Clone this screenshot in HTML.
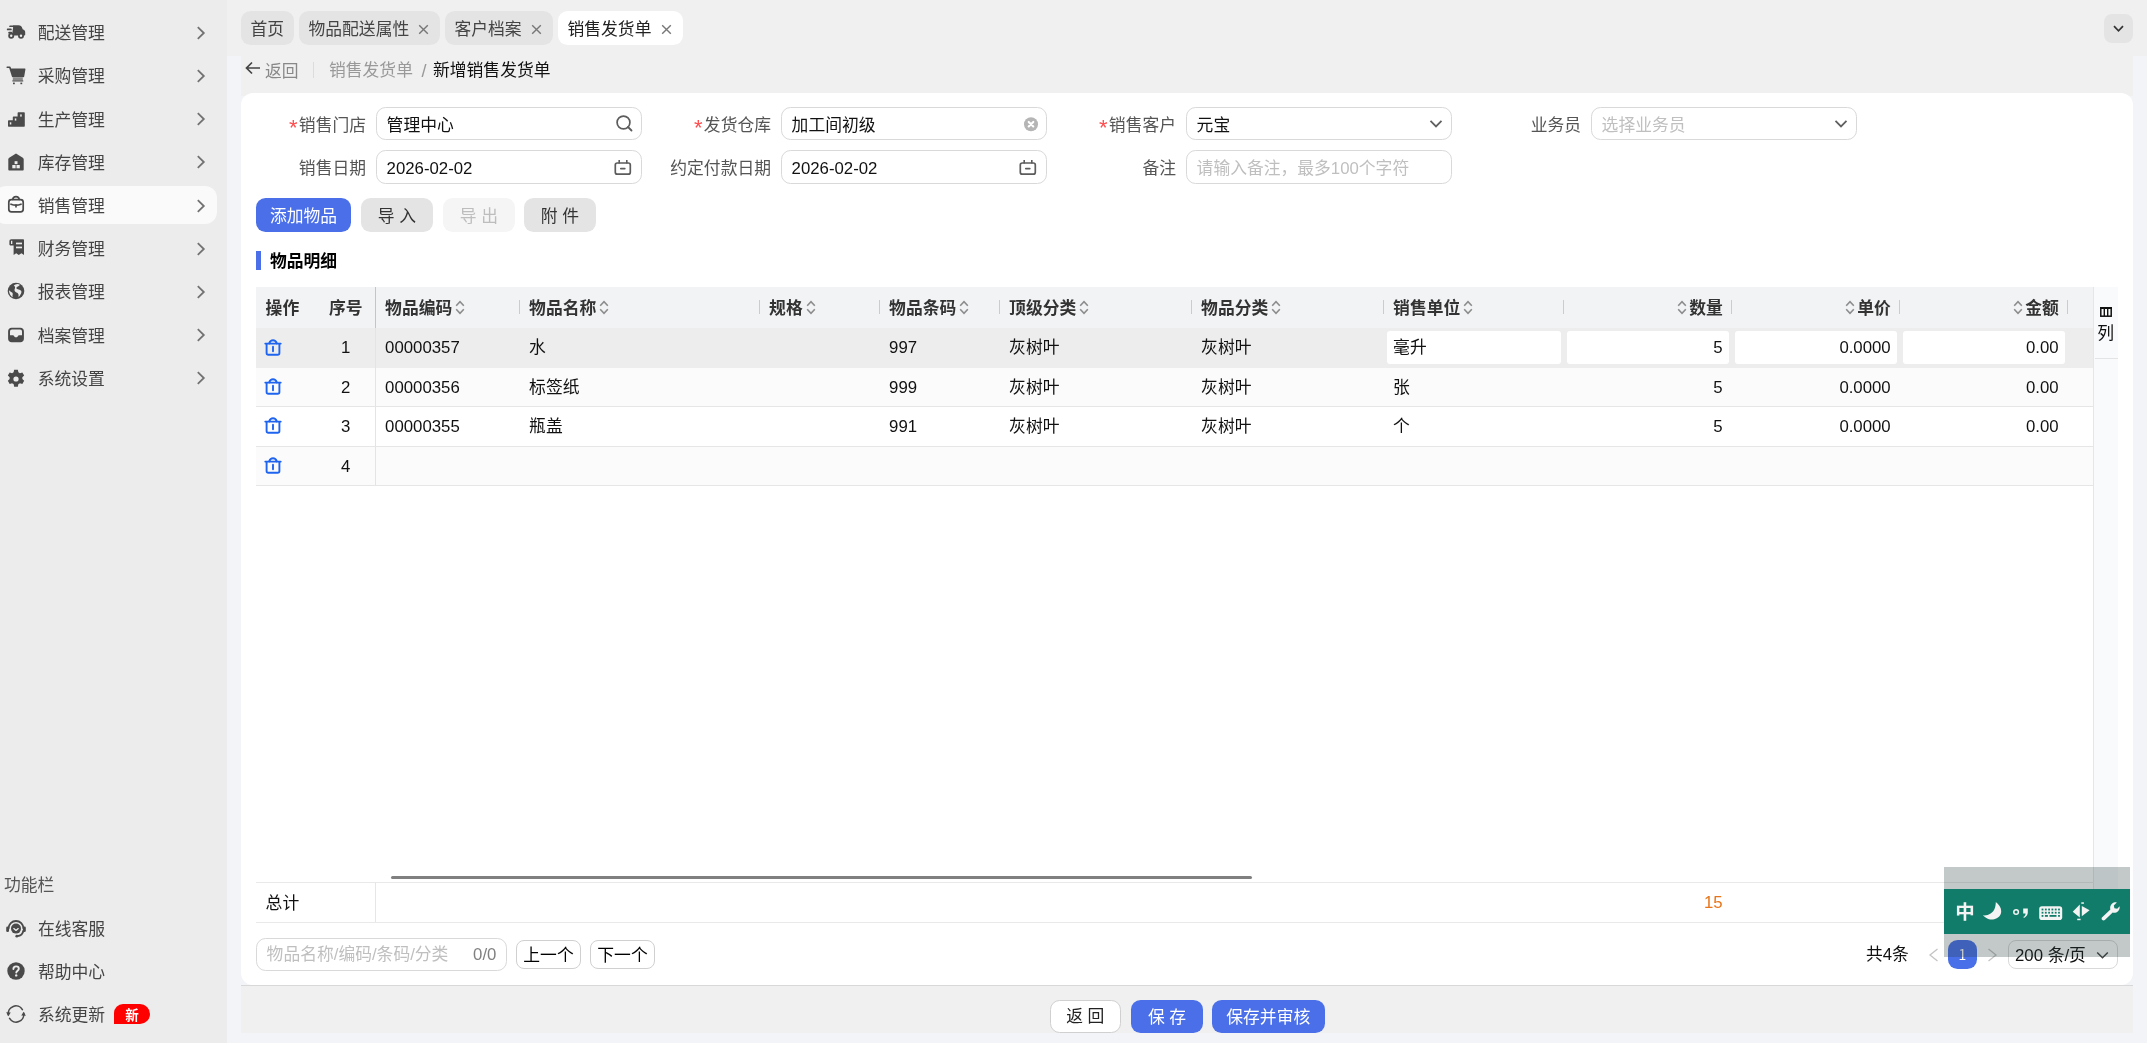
<!DOCTYPE html>
<html lang="zh-CN">
<head>
<meta charset="utf-8">
<title>新增销售发货单</title>
<style>
*{box-sizing:border-box;margin:0;padding:0}
html,body{width:2147px;height:1043px;overflow:hidden}
body{will-change:transform;position:relative;background:#f0f0f0;font-family:"Liberation Sans","Noto Sans CJK SC",sans-serif;font-size:16.8px;color:#333;line-height:1}
.abs{position:absolute}
.fx{display:flex;align-items:center}
/* sidebar */
#side{position:absolute;left:0;top:0;width:227px;height:1043px;background:#ececec}
.mi{position:absolute;left:-6px;width:223px;height:38px;border-radius:12px;display:flex;align-items:center;color:#444;font-size:16.8px}
.mi.on{background:#fafafa}
.mi svg.ic{position:absolute;left:12px;top:9.2px;width:20px;height:20px}
.mi span{position:absolute;left:43.7px;top:1.5px;line-height:38px;white-space:nowrap}
.mi svg.ch{position:absolute;left:201.2px;top:11.2px;width:12px;height:16px}
.fi{position:absolute;left:0;width:227px;height:38px;color:#444}
.fi svg.ic{position:absolute;left:6px;top:9px;width:20px;height:20px}
.fi span{position:absolute;left:38px;top:1.5px;line-height:38px;white-space:nowrap}
/* tabs */
.tab{position:absolute;top:11px;height:34px;padding-top:1.5px;border-radius:9.6px;background:#e4e4e4;color:#444;font-size:16.8px;line-height:34px;padding-left:9.5px;white-space:nowrap}
.tab.on{background:#fff;color:#222}
.tab .x{position:absolute;top:12.8px;width:11px;height:11px}
/* card */
#card{position:absolute;left:241px;top:93px;width:1892px;height:892px;background:#fff;border-radius:12px}
.lbl{position:absolute;height:33.6px;padding-top:1.8px;line-height:33.6px;text-align:right;color:#555;white-space:nowrap;font-size:16.8px}
.lbl i{color:#ff4d4f;font-style:normal;font-size:22px;line-height:10px;position:relative;top:3.8px;margin-right:1.2px}
.inp{position:absolute;height:33.6px;padding-top:1.8px;border:1px solid #d9d9d9;border-radius:9.6px;background:#fff;line-height:31.6px;padding-left:9.6px;color:#111;font-size:16.8px;white-space:nowrap}
.inp.ph{color:#bfbfbf}
.inp svg{position:absolute}
.btn{position:absolute;height:33.6px;padding-top:2px;border-radius:9.6px;line-height:33.6px;text-align:center;font-size:16.8px;white-space:nowrap}
.btn.pri{background:#4a6fe8;color:#fff}
.btn.gry{background:#e4e4e4;color:#333}
.btn.dis{background:#f5f5f5;color:#bdbdbd}
.btn.out{background:#fff;border:1px solid #d0d0d0;color:#222;line-height:31.6px}
</style>
</head>
<body>
<div id="side">
<div class="mi" style="top:13.6px"><svg class="ic" style="margin-top:-0.8px" viewBox="0 0 20 20"><g fill="#4a4a4a"><rect x="3.2" y="3.4" width="5" height="1.7" rx=".85"/><rect x=".8" y="6.6" width="5" height="1.7" rx=".85"/><rect x="2.2" y="9.8" width="4" height="1.7" rx=".85"/>
<path d="M7.2 3.2h5.2c2.2 0 3.3 1.2 4 3.2l.5 1.2c1.5.3 2.3 1.2 2.3 2.6v2.6c0 .5-.3.8-.8.8H5.6c-.4 0-.6-.3-.6-.6l1.4-2.400.6-4.400z"/>
<circle cx="5.200" cy="13.800" r="3"/><circle cx="15" cy="13.800" r="3"/></g><circle cx="5.200" cy="13.800" r="1.200" fill="#ececec"/><circle cx="15" cy="13.800" r="1.200" fill="#ececec"/></svg><span>配送管理</span><svg class="ch" viewBox="0 0 12 16"><path d="M2.800 2.200l6 5.800-6 5.800" fill="none" stroke="#727272" stroke-width="1.800"/></svg></div>
<div class="mi" style="top:56.8px"><svg class="ic" style="margin-top:-1.2px" viewBox="0 0 20 20"><g fill="#4a4a4a"><path d="M1.200 1.500h2.600c.5 0 .8.300.9.700l.4 1.300h13.600c.5 0 .8.400.7.900l-1.200 7.200c-.1.400-.4.700-.9.700H6.800c-.4 0-.8-.3-.9-.7L3.200 3.100H1.200c-.5 0-.8-.4-.8-.800s.3-.800.8-.800z"/><rect x="6.3" y="15.200" width="11" height="1.400" rx=".5"/><rect x="7" y="17.600" width="1.800" height="1.600"/><rect x="14.400" y="17.600" width="1.800" height="1.600"/></g><rect x="6.800" y="12.300" width="10" height="2.900" fill="#8a8a8a"/></svg><span>采购管理</span><svg class="ch" viewBox="0 0 12 16"><path d="M2.800 2.200l6 5.800-6 5.800" fill="none" stroke="#727272" stroke-width="1.800"/></svg></div>
<div class="mi" style="top:100.0px"><svg class="ic" style="margin-top:0.5px" viewBox="0 0 20 20"><path fill="#4a4a4a" d="M12.600 2.200h5.200c.6 0 1 .4 1 1v12.600c0 .6-.4 1-1 1H3c-.6 0-1-.4-1-1v-4.600c0-.6.4-1 1-1h3.800V7.600c0-.6.4-1 1-1h3.800V3.200c0-.6.400-1 1-1z"/><g fill="#ececec"><rect x="3.800" y="12.300" width="1.500" height="2.200"/><rect x="8.800" y="8.400" width="1.500" height="2.200"/><rect x="14.200" y="4.400" width="1.500" height="2.200"/></g></svg><span>生产管理</span><svg class="ch" viewBox="0 0 12 16"><path d="M2.800 2.200l6 5.800-6 5.800" fill="none" stroke="#727272" stroke-width="1.800"/></svg></div>
<div class="mi" style="top:143.2px"><svg class="ic" style="margin-top:-0.7px" viewBox="0 0 20 20"><path fill="#4a4a4a" d="M10 1.400l6.800 4.400c.6.400.9 1 .9 1.700v9.900c0 .7-.5 1.200-1.200 1.200h-13c-.7 0-1.200-.5-1.200-1.200V7.500c0-.7.300-1.300.9-1.700z"/><g fill="#ececec"><rect x="8.600" y="9.200" width="2.900" height="2.900"/><rect x="6.300" y="13" width="3.300" height="3.300"/><rect x="10.500" y="13" width="3.300" height="3.300"/></g></svg><span>库存管理</span><svg class="ch" viewBox="0 0 12 16"><path d="M2.800 2.200l6 5.800-6 5.800" fill="none" stroke="#727272" stroke-width="1.800"/></svg></div>
<div class="mi on" style="top:186.4px"><svg class="ic" style="margin-top:-1.4px" viewBox="0 0 20 20"><g fill="none" stroke="#4a4a4a" stroke-width="1.700" stroke-linecap="round" stroke-linejoin="round"><rect x="2.800" y="5.600" width="14.400" height="12.200" rx="2.600"/><path d="M6.800 5.400c.2-2 1.200-2.800 3.200-2.800s3 .8 3.200 2.800"/><path d="M5 10.200c3.200 1.300 6.800 1.300 10 0"/><path d="M10 11.200v1.600"/></g></svg><span>销售管理</span><svg class="ch" viewBox="0 0 12 16"><path d="M2.800 2.200l6 5.800-6 5.800" fill="none" stroke="#727272" stroke-width="1.800"/></svg></div>
<div class="mi" style="top:229.6px"><svg class="ic" style="margin-top:-1.8px" viewBox="0 0 20 20"><path fill="#4a4a4a" d="M5.400 2.200h11.800c.5 0 .8.300.8.800v15l-2.600-1.800-2.600 1.800-2.600-1.800-2.600 1.800V8.400H4.200c-.5 0-.8-.3-.8-.8V4.200c0-1.200.8-2 2-2z"/><g fill="#ececec"><rect x="5" y="3.800" width="1.300" height="3.200"/><rect x="10" y="5.600" width="6" height="1.700"/><rect x="10" y="9.600" width="6" height="1.700"/></g></svg><span>财务管理</span><svg class="ch" viewBox="0 0 12 16"><path d="M2.800 2.200l6 5.800-6 5.800" fill="none" stroke="#727272" stroke-width="1.800"/></svg></div>
<div class="mi" style="top:272.8px"><svg class="ic" style="margin-top:-1px" viewBox="0 0 20 20"><circle cx="10" cy="10" r="8.300" fill="#4a4a4a"/><path fill="#ececec" d="M11.400 3c.8 0 1.600.200 2.300.5-.1 1-.8 1.500-1.700 1.900-1 .4-1.800 1-1.600 1.900.2.800 1.200.9 2.200 1.100 1.300.2 2.600.8 2.800 2.200.2 1.200-.4 2.200-1.100 3.100-.6.800-.9 1.800-1.700 2.300-.2-1 .2-2.100-.3-3-.5-1-1.700-1.300-2.600-1.900-1-.7-1.400-1.700-1.100-2.800.2-.7.600-1.300.5-2-.1-.8-.7-1.300-1.400-1.700 1-.9 2.300-1.500 3.700-1.600z"/><path fill="#ececec" d="M3.300 9.200c.6.600 1 1.300 1.800 1.700.7.400 1.400.7 1.600 1.500.2.900-.3 1.700-.2 2.600 0 .4.100.8.300 1.200-2.100-1.200-3.600-3.400-3.700-6 0-.3.100-.7.200-1z"/></svg><span>报表管理</span><svg class="ch" viewBox="0 0 12 16"><path d="M2.800 2.200l6 5.800-6 5.800" fill="none" stroke="#727272" stroke-width="1.800"/></svg></div>
<div class="mi" style="top:316.0px"><svg class="ic" style="margin-top:0.3px" viewBox="0 0 20 20"><path fill="#4a4a4a" d="M5.600 2.700h8.800c2 0 3.500 1.500 3.500 3.500v7.600c0 2-1.500 3.500-3.500 3.500H5.600c-2 0-3.500-1.500-3.500-3.500V6.200c0-2 1.500-3.500 3.500-3.500z"/><path fill="#ececec" d="M6 4.600h8c1.200 0 2 .8 2 2v3.600h-3c-.5 0-.8.200-1 .7-.400.900-1 1.400-2 1.400s-1.600-.5-2-1.400c-.2-.5-.5-.7-1-.7H4V6.600c0-1.200.8-2 2-2z"/></svg><span>档案管理</span><svg class="ch" viewBox="0 0 12 16"><path d="M2.800 2.200l6 5.800-6 5.800" fill="none" stroke="#727272" stroke-width="1.800"/></svg></div>
<div class="mi" style="top:359.2px"><svg class="ic" style="margin-top:1px" viewBox="0 0 20 20"><g transform="translate(10 10) scale(1.09) translate(-10 -10)"><path fill="#4a4a4a" d="M8.300 1.600h3.400l.5 2.300c.5.200 1 .5 1.400.800l2.200-.7 1.700 2.900-1.700 1.600c.1.500.1 1 0 1.600l1.700 1.600-1.700 2.900-2.200-.7c-.4.300-.9.600-1.400.800l-.5 2.300H8.300l-.5-2.300c-.5-.2-1-.5-1.400-.800l-2.200.7-1.700-2.900 1.700-1.600c-.1-.5-.1-1 0-1.600L2.500 6.900l1.700-2.900 2.200.7c.4-.3.900-.6 1.400-.800z"/><circle cx="10" cy="10" r="2.400" fill="#ececec"/></g></svg><span>系统设置</span><svg class="ch" viewBox="0 0 12 16"><path d="M2.800 2.200l6 5.800-6 5.800" fill="none" stroke="#727272" stroke-width="1.800"/></svg></div>
<div class="abs" style="left:4px;top:868.500px;height:34px;line-height:34px;color:#555;font-size:16.800px">功能栏</div>
<div class="fi" style="top:909.6px"><svg class="ic" viewBox="0 0 20 20"><g fill="none" stroke="#4a4a4a" stroke-width="1.900" stroke-linecap="round"><path d="M2.600 9.400a7.400 7.400 0 0 1 14.800 0"/><path d="M17.300 11.800c-.5 3.200-2.800 5-6 5.300"/></g><rect x=".2" y="7.600" width="2.800" height="5.400" rx="1.300" fill="#4a4a4a"/><rect x="17" y="7.600" width="2.800" height="5.400" rx="1.300" fill="#4a4a4a"/><circle cx="10" cy="9.600" r="5" fill="#4a4a4a"/><path d="M7.800 9.600l2.200 1.800 2.200-1.800" fill="none" stroke="#ececec" stroke-width="1.300" stroke-linecap="round" stroke-linejoin="round"/><circle cx="10.800" cy="17.200" r="1.400" fill="#4a4a4a"/></svg><span>在线客服</span></div>
<div class="fi" style="top:952.2px"><svg class="ic" viewBox="0 0 20 20"><circle cx="10" cy="10" r="8.700" fill="#4a4a4a"/><path d="M7.400 8c0-1.600 1.100-2.600 2.700-2.600s2.700 1 2.700 2.300c0 1.900-2.500 2-2.500 3.900" fill="none" stroke="#ececec" stroke-width="1.900" stroke-linecap="round"/><circle cx="10.200" cy="14.400" r="1.200" fill="#ececec"/></svg><span>帮助中心</span></div>
<div class="fi" style="top:995.2px"><svg class="ic" viewBox="0 0 20 20"><g fill="none" stroke="#4a4a4a" stroke-width="1.600" stroke-linecap="round" stroke-linejoin="round"><path d="M2.400 10.800A7.600 7.600 0 0 1 16.400 5.600"/><path d="M17.600 9.200A7.600 7.600 0 0 1 3.600 14.400"/></g><path fill="#4a4a4a" d="M.2 8.200l4.600.4-2.600 3.600zM19.800 11.800l-4.600-.4 2.600-3.600z"/></svg><span>系统更新</span></div>
<div class="abs" style="left:114px;top:1004px;width:36px;height:20px;background:#f00;border-radius:9px 10px 10px 0;color:#fff;font-weight:bold;font-size:13.500px;line-height:20px;padding-top:1.500px;text-align:center">新</div>
</div>
<div id="main">
<!--TABS-->
<div class="tab" style="left:241px;width:53px">首页</div>
<div class="tab" style="left:299px;width:141px">物品配送属性<svg class="x" style="left:119px" viewBox="0 0 11 11"><path d="M1.200 1.200l8.600 8.600M9.800 1.200l-8.600 8.600" stroke="#777" stroke-width="1.400" fill="none"/></svg></div>
<div class="tab" style="left:445px;width:108px">客户档案<svg class="x" style="left:86px" viewBox="0 0 11 11"><path d="M1.200 1.200l8.600 8.600M9.800 1.200l-8.600 8.600" stroke="#777" stroke-width="1.400" fill="none"/></svg></div>
<div class="tab on" style="left:558px;width:125px">销售发货单<svg class="x" style="left:103px" viewBox="0 0 11 11"><path d="M1.200 1.200l8.600 8.600M9.800 1.200l-8.600 8.600" stroke="#777" stroke-width="1.400" fill="none"/></svg></div>
<div class="abs" style="left:2104px;top:14px;width:29px;height:29px;border-radius:8px;background:#e4e4e4"><svg class="abs" style="left:9px;top:11px" width="11" height="8" viewBox="0 0 11 8"><path d="M1 1.200l4.500 4.600L10 1.200" fill="none" stroke="#333" stroke-width="1.700"/></svg></div>
<div class="abs" style="left:227px;top:56px;width:1920px;height:987px;background:#f3f4f7"></div>
<div class="abs" style="left:241px;top:56px;width:1892px;height:40px;background:#f0f0f0"></div>
<div class="abs" style="left:241px;top:985px;width:1892px;height:48px;background:#f0f0f0;border-top:1px solid #d8d8d8"></div>
<svg class="abs" style="left:245px;top:61px" width="16" height="14" viewBox="0 0 16 14"><path d="M7 1.500L1.500 7l5.500 5.500M1.500 7H15" fill="none" stroke="#444" stroke-width="1.700"/></svg>
<div class="abs" style="left:265px;top:54.500px;line-height:34px;color:#888">返回</div>
<div class="abs" style="left:313px;top:62px;width:1px;height:16px;background:#dcdcdc"></div>
<div class="abs" style="left:329px;top:53.800px;line-height:34px;color:#999">销售发货单</div>
<div class="abs" style="left:421.500px;top:53.800px;line-height:34px;color:#999;font-size:18px">/</div>
<div class="abs" style="left:433px;top:53.800px;line-height:34px;color:#111">新增销售发货单</div>
<div id="card"></div>
<!--FORM-->
<div class="lbl" style="left:166px;width:200px;top:107.2px"><i>*</i>销售门店</div>
<div class="inp" style="left:376px;top:107.2px;width:266px;height:32.600px;line-height:30.600px;padding-top:2.600px">管理中心<svg style="right:6.600px;top:5.800px" width="19" height="19" viewBox="0 0 19 19"><circle cx="8.500" cy="8.500" r="6.400" fill="none" stroke="#5c5c5c" stroke-width="1.700"/><path d="M13 13l3.500 3.500" stroke="#5c5c5c" stroke-width="1.800" stroke-linecap="round"/></svg></div>
<div class="lbl" style="left:571px;width:200px;top:107.2px"><i>*</i>发货仓库</div>
<div class="inp" style="left:781px;top:107.2px;width:266px;height:32.600px;line-height:30.600px;padding-top:2.600px">加工间初级<svg style="right:7px;top:8px" width="16" height="16" viewBox="0 0 16 16"><circle cx="8" cy="8.200" r="7" fill="#b5b5b5"/><path d="M5.700 5.900l4.600 4.600M10.300 5.900l-4.600 4.600" stroke="#fff" stroke-width="2.100" stroke-linecap="round"/></svg></div>
<div class="lbl" style="left:976px;width:200px;top:107.2px"><i>*</i>销售客户</div>
<div class="inp" style="left:1186px;top:107.2px;width:266px;height:32.600px;line-height:30.600px;padding-top:2.600px">元宝<svg style="right:8.500px;top:10.400px" width="14" height="10" viewBox="0 0 14 10"><path d="M1.500 1.800L7 7.400l5.500-5.600" fill="none" stroke="#606060" stroke-width="1.800"/></svg></div>
<div class="lbl" style="left:1381px;width:200px;top:107.2px">业务员</div>
<div class="inp ph" style="left:1591px;top:107.2px;width:266px;height:32.600px;line-height:30.600px;padding-top:2.600px">选择业务员<svg style="right:8.500px;top:10.400px" width="14" height="10" viewBox="0 0 14 10"><path d="M1.500 1.800L7 7.400l5.500-5.600" fill="none" stroke="#606060" stroke-width="1.800"/></svg></div>
<div class="lbl" style="left:166px;width:200px;top:150.3px">销售日期</div>
<div class="inp" style="left:376px;top:150.3px;width:266px">2026-02-02<svg style="right:9.500px;top:7.300px" width="18" height="19" viewBox="0 0 18 19"><rect x="1.300" y="4" width="15" height="11.200" rx="2" fill="none" stroke="#5c5c5c" stroke-width="1.700"/><path d="M5.200 1v3.400M12.800 1v3.400" stroke="#5c5c5c" stroke-width="1.600"/><path d="M6.800 9.600h4" stroke="#5c5c5c" stroke-width="1.700" stroke-linecap="round"/></svg></div>
<div class="lbl" style="left:571px;width:200px;top:150.3px">约定付款日期</div>
<div class="inp" style="left:781px;top:150.3px;width:266px">2026-02-02<svg style="right:9.500px;top:7.300px" width="18" height="19" viewBox="0 0 18 19"><rect x="1.300" y="4" width="15" height="11.200" rx="2" fill="none" stroke="#5c5c5c" stroke-width="1.700"/><path d="M5.200 1v3.400M12.800 1v3.400" stroke="#5c5c5c" stroke-width="1.600"/><path d="M6.800 9.600h4" stroke="#5c5c5c" stroke-width="1.700" stroke-linecap="round"/></svg></div>
<div class="lbl" style="left:976px;width:200px;top:150.3px">备注</div>
<div class="inp ph" style="left:1186px;top:150.3px;width:266px">请输入备注，最多100个字符</div>
<div class="btn pri" style="left:256px;top:198.200px;width:95px">添加物品</div>
<div class="btn gry" style="left:361.200px;top:198.200px;width:71.500px">导 入</div>
<div class="btn dis" style="left:443.200px;top:198.200px;width:71.500px">导 出</div>
<div class="btn gry" style="left:524.200px;top:198.200px;width:71.500px">附 件</div>
<div class="abs" style="left:256px;top:251px;width:4.500px;height:19px;background:#4a6fe8"></div>
<div class="abs" style="left:270px;top:244.800px;line-height:34px;font-weight:bold;color:#000;font-size:16.800px">物品明细</div>
<!--TABLE-->
<style>.th{position:absolute;top:287.3px;height:40.69999999999999px;display:flex;align-items:center;font-weight:bold;color:#333;font-size:16.800px;white-space:nowrap;padding-top:3.500px}.th .st{margin:0 0 0 3px;position:relative;top:-1.800px}.th.r .st{margin:0 2px 0 0}.td{position:absolute;height:39px;display:flex;align-items:center;color:#111;font-size:16.800px;white-space:nowrap;padding-top:1.500px}.tick{position:absolute;top:300px;width:1.200px;height:14px;background:#c8ccd8}.cellin{position:absolute;height:33px;background:#fff;border-radius:3px}</style>
<div class="abs" style="left:256px;top:287.3px;width:1837.500px;height:40.69999999999999px;background:#f2f3f5"></div>
<div class="abs" style="left:256px;top:328px;width:1837.500px;height:39.6px;background:#ededed"></div>
<div class="abs" style="left:256px;top:367.6px;width:1837.500px;height:39.2px;background:#fafbfa;border-bottom:1px solid #e6e6e6"></div>
<div class="abs" style="left:256px;top:406.8px;width:1837.500px;height:40.0px;background:#ffffff;border-bottom:1px solid #e6e6e6"></div>
<div class="abs" style="left:256px;top:446.8px;width:1837.500px;height:39.2px;background:#fafbfa;border-bottom:1px solid #e6e6e6"></div>
<div class="th" style="left:265.6px">操作</div>
<div class="th" style="left:316px;width:59.5px;justify-content:center">序号</div>
<div class="th" style="left:385.1px">物品编码<svg class="st" width="10" height="15" viewBox="0 0 10 15"><path d="M1.200 5.700L5 1.600l3.800 4.100M1.200 9.300L5 13.400l3.800-4.100" fill="none" stroke="#8c8c8c" stroke-width="1.600"/></svg></div>
<div class="th" style="left:529.1px">物品名称<svg class="st" width="10" height="15" viewBox="0 0 10 15"><path d="M1.200 5.700L5 1.600l3.800 4.100M1.200 9.300L5 13.400l3.800-4.100" fill="none" stroke="#8c8c8c" stroke-width="1.600"/></svg></div>
<div class="th" style="left:769.1px">规格<svg class="st" width="10" height="15" viewBox="0 0 10 15"><path d="M1.200 5.700L5 1.600l3.800 4.100M1.200 9.300L5 13.400l3.800-4.100" fill="none" stroke="#8c8c8c" stroke-width="1.600"/></svg></div>
<div class="th" style="left:889.1px">物品条码<svg class="st" width="10" height="15" viewBox="0 0 10 15"><path d="M1.200 5.700L5 1.600l3.800 4.100M1.200 9.300L5 13.400l3.800-4.100" fill="none" stroke="#8c8c8c" stroke-width="1.600"/></svg></div>
<div class="th" style="left:1009.1px">顶级分类<svg class="st" width="10" height="15" viewBox="0 0 10 15"><path d="M1.200 5.700L5 1.600l3.800 4.100M1.200 9.300L5 13.400l3.800-4.100" fill="none" stroke="#8c8c8c" stroke-width="1.600"/></svg></div>
<div class="th" style="left:1201.1px">物品分类<svg class="st" width="10" height="15" viewBox="0 0 10 15"><path d="M1.200 5.700L5 1.600l3.800 4.100M1.200 9.300L5 13.400l3.800-4.100" fill="none" stroke="#8c8c8c" stroke-width="1.600"/></svg></div>
<div class="th" style="left:1393.1px">销售单位<svg class="st" width="10" height="15" viewBox="0 0 10 15"><path d="M1.200 5.700L5 1.600l3.800 4.100M1.200 9.300L5 13.400l3.800-4.100" fill="none" stroke="#8c8c8c" stroke-width="1.600"/></svg></div>
<div class="th r" style="left:1563.5px;width:168.0px;justify-content:flex-end;padding-right:8.800px"><svg class="st" width="10" height="15" viewBox="0 0 10 15"><path d="M1.200 5.700L5 1.600l3.800 4.100M1.200 9.300L5 13.400l3.800-4.100" fill="none" stroke="#8c8c8c" stroke-width="1.600"/></svg>数量</div>
<div class="th r" style="left:1731.5px;width:168.0px;justify-content:flex-end;padding-right:8.800px"><svg class="st" width="10" height="15" viewBox="0 0 10 15"><path d="M1.200 5.700L5 1.600l3.800 4.100M1.200 9.300L5 13.400l3.800-4.100" fill="none" stroke="#8c8c8c" stroke-width="1.600"/></svg>单价</div>
<div class="th r" style="left:1899.5px;width:168.0px;justify-content:flex-end;padding-right:8.800px"><svg class="st" width="10" height="15" viewBox="0 0 10 15"><path d="M1.200 5.700L5 1.600l3.800 4.100M1.200 9.300L5 13.400l3.800-4.100" fill="none" stroke="#8c8c8c" stroke-width="1.600"/></svg>金额</div>
<div class="tick" style="left:518.9px"></div>
<div class="tick" style="left:758.9px"></div>
<div class="tick" style="left:878.9px"></div>
<div class="tick" style="left:998.9px"></div>
<div class="tick" style="left:1190.9px"></div>
<div class="tick" style="left:1382.9px"></div>
<div class="tick" style="left:1562.9px"></div>
<div class="tick" style="left:1730.9px"></div>
<div class="tick" style="left:1898.9px"></div>
<div class="tick" style="left:2066.9px"></div>
<div class="abs" style="left:375px;top:287.3px;width:1px;height:40.69999999999999px;background:#c0c4d4"></div>
<div class="abs" style="left:375px;top:328px;width:1px;height:158.0px;background:#e4e4e4"></div>
<div class="abs" style="left:2093px;top:287.3px;width:1px;height:634.7px;background:#e6e6e6"></div>
<div class="abs" style="left:2094px;top:287.300px;width:23.500px;height:635px;background:#f9fafb"></div>
<div class="abs" style="left:2095px;top:358px;width:22.500px;height:1px;background:#e4e4e4"></div>
<svg class="abs" style="left:2100px;top:306.800px" width="12" height="10" viewBox="0 0 12 10"><rect x=".8" y="1" width="10.400" height="8.200" fill="none" stroke="#111" stroke-width="1.500"/><path d="M0 1h12" stroke="#111" stroke-width="2"/><path d="M4.300 1v8M7.700 1v8" stroke="#111" stroke-width="1.400"/></svg>
<div class="abs" style="left:2097.300px;top:321.800px;line-height:24px;font-size:16.800px;color:#111">列</div>
<div class="cellin" style="left:1386.8px;top:331px;width:174.20000000000005px"></div>
<div class="cellin" style="left:1567px;top:331px;width:162px"></div>
<div class="cellin" style="left:1735px;top:331px;width:162px"></div>
<div class="cellin" style="left:1903px;top:331px;width:162px"></div>
<svg class="abs" style="left:264px;top:338.5px" width="18" height="18" viewBox="0 0 18 18"><g fill="none" stroke="#1e64f0" stroke-width="1.900" stroke-linejoin="round" stroke-linecap="round"><path d="M1.300 4.600h15.400"/><path d="M5.200 4.400C6 2.200 7.400 1.300 9 1.300s3 .9 3.800 3.100"/><path d="M2.600 5v9c0 1.100.7 1.800 1.800 1.800h9.200c1.100 0 1.800-.7 1.800-1.800V5"/><path d="M9 7.800v4.400"/></g></svg>
<div class="td" style="left:316px;width:59.500px;top:328px;justify-content:center">1</div>
<div class="td" style="left:385.1px;top:328px">00000357</div>
<div class="td" style="left:529.1px;top:328px">水</div>
<div class="td" style="left:889.1px;top:328px">997</div>
<div class="td" style="left:1009.1px;top:328px">灰树叶</div>
<div class="td" style="left:1201.1px;top:328px">灰树叶</div>
<div class="td" style="left:1393.1px;top:328px">毫升</div>
<div class="td" style="left:1563.5px;width:168.0px;top:328px;justify-content:flex-end;padding-right:8.800px">5</div>
<div class="td" style="left:1731.5px;width:168.0px;top:328px;justify-content:flex-end;padding-right:8.800px">0.0000</div>
<div class="td" style="left:1899.5px;width:168.0px;top:328px;justify-content:flex-end;padding-right:8.800px">0.00</div>
<svg class="abs" style="left:264px;top:378.1px" width="18" height="18" viewBox="0 0 18 18"><g fill="none" stroke="#1e64f0" stroke-width="1.900" stroke-linejoin="round" stroke-linecap="round"><path d="M1.300 4.600h15.400"/><path d="M5.200 4.400C6 2.200 7.400 1.300 9 1.300s3 .9 3.800 3.100"/><path d="M2.600 5v9c0 1.100.7 1.800 1.800 1.800h9.200c1.100 0 1.800-.7 1.800-1.800V5"/><path d="M9 7.800v4.400"/></g></svg>
<div class="td" style="left:316px;width:59.500px;top:368.5px;justify-content:center">2</div>
<div class="td" style="left:385.1px;top:368.5px">00000356</div>
<div class="td" style="left:529.1px;top:368.5px">标签纸</div>
<div class="td" style="left:889.1px;top:368.5px">999</div>
<div class="td" style="left:1009.1px;top:368.5px">灰树叶</div>
<div class="td" style="left:1201.1px;top:368.5px">灰树叶</div>
<div class="td" style="left:1393.1px;top:368.5px">张</div>
<div class="td" style="left:1563.5px;width:168.0px;top:368.5px;justify-content:flex-end;padding-right:8.800px">5</div>
<div class="td" style="left:1731.5px;width:168.0px;top:368.5px;justify-content:flex-end;padding-right:8.800px">0.0000</div>
<div class="td" style="left:1899.5px;width:168.0px;top:368.5px;justify-content:flex-end;padding-right:8.800px">0.00</div>
<svg class="abs" style="left:264px;top:417.3px" width="18" height="18" viewBox="0 0 18 18"><g fill="none" stroke="#1e64f0" stroke-width="1.900" stroke-linejoin="round" stroke-linecap="round"><path d="M1.300 4.600h15.400"/><path d="M5.200 4.400C6 2.200 7.400 1.300 9 1.300s3 .9 3.800 3.100"/><path d="M2.600 5v9c0 1.100.7 1.800 1.800 1.800h9.200c1.100 0 1.800-.7 1.800-1.800V5"/><path d="M9 7.800v4.400"/></g></svg>
<div class="td" style="left:316px;width:59.500px;top:406.8px;justify-content:center">3</div>
<div class="td" style="left:385.1px;top:406.8px">00000355</div>
<div class="td" style="left:529.1px;top:406.8px">瓶盖</div>
<div class="td" style="left:889.1px;top:406.8px">991</div>
<div class="td" style="left:1009.1px;top:406.8px">灰树叶</div>
<div class="td" style="left:1201.1px;top:406.8px">灰树叶</div>
<div class="td" style="left:1393.1px;top:406.8px">个</div>
<div class="td" style="left:1563.5px;width:168.0px;top:406.8px;justify-content:flex-end;padding-right:8.800px">5</div>
<div class="td" style="left:1731.5px;width:168.0px;top:406.8px;justify-content:flex-end;padding-right:8.800px">0.0000</div>
<div class="td" style="left:1899.5px;width:168.0px;top:406.8px;justify-content:flex-end;padding-right:8.800px">0.00</div>
<svg class="abs" style="left:264px;top:457.3px" width="18" height="18" viewBox="0 0 18 18"><g fill="none" stroke="#1e64f0" stroke-width="1.900" stroke-linejoin="round" stroke-linecap="round"><path d="M1.300 4.600h15.400"/><path d="M5.200 4.400C6 2.200 7.400 1.300 9 1.300s3 .9 3.800 3.100"/><path d="M2.600 5v9c0 1.100.7 1.800 1.800 1.800h9.200c1.100 0 1.800-.7 1.800-1.800V5"/><path d="M9 7.800v4.400"/></g></svg>
<div class="td" style="left:316px;width:59.500px;top:446.8px;justify-content:center">4</div>
<div class="abs" style="left:391px;top:876px;width:861px;height:3px;border-radius:2px;background:#808080"></div>
<div class="abs" style="left:256px;top:882px;width:1837.500px;height:40.500px;border-top:1px solid #e9e9e9;border-bottom:1px solid #e9e9e9"></div>
<div class="abs" style="left:375px;top:882px;width:1px;height:40px;background:#e6e6e6"></div>
<div class="td" style="left:265.600px;top:884px">总计</div>
<div class="td" style="left:1563.500px;width:168px;top:883.500px;justify-content:flex-end;padding-right:8.800px;color:#e8751a">15</div>
<!--BOTTOM-->
<div class="inp ph" style="left:256px;top:938px;width:251px;height:32.500px;line-height:30.500px;padding-top:.9px">物品名称/编码/条码/分类<span style="position:absolute;right:9.600px;top:1px;color:#808080">0/0</span></div>
<div class="btn out" style="left:516px;top:940.200px;width:65px;height:28.600px;line-height:26px;padding-top:2px;border-radius:8px;color:#000">上一个</div>
<div class="btn out" style="left:590px;top:940.200px;width:65px;height:28.600px;line-height:26px;padding-top:2px;border-radius:8px;color:#000">下一个</div>
<div class="abs" style="left:1866px;top:937px;line-height:36px;color:#111;white-space:nowrap">共4条</div>
<svg class="abs" style="left:1928px;top:947.500px" width="11" height="14" viewBox="0 0 11 14"><path d="M9.500 1L2 7l7.500 6" fill="none" stroke="#c4c4c4" stroke-width="1.300"/></svg>
<div class="abs" style="left:1948px;top:940px;width:29px;height:29px;border-radius:9.600px;background:#4a70e9;color:#fff;font-family:Noto Sans CJK SC,sans-serif;font-size:14px;line-height:29px;text-align:center">1</div>
<svg class="abs" style="left:1987px;top:947.500px" width="11" height="14" viewBox="0 0 11 14"><path d="M1.500 1L9 7l-7.500 6" fill="none" stroke="#c4c4c4" stroke-width="1.300"/></svg>
<div class="abs" style="left:2008px;top:940px;width:110px;height:29px;border-radius:8px;border:1px solid #d9d9d9;background:#fff;line-height:29px;padding-left:6px;color:#111;white-space:nowrap">200 条/页<svg class="abs" style="right:8px;top:10px" width="13" height="9" viewBox="0 0 13 9"><path d="M1.200 1.500L6.500 6.800l5.300-5.300" fill="none" stroke="#444" stroke-width="1.500"/></svg></div>
<div class="abs" style="left:1944px;top:867px;width:186px;height:90px;background:rgba(40,60,60,.28)"></div>
<div class="abs" style="left:1944px;top:889px;width:186px;height:45.200px;background:#127c6a"></div>
<div class="abs" style="left:1953px;top:900.500px;width:24px;line-height:22px;font-size:19.500px;font-weight:bold;color:#f4f4f4;text-align:center">中</div>
<svg class="abs" style="left:1983px;top:902px" width="19" height="19" viewBox="0 0 19 19"><path d="M12.800 0C17 3 19.500 8 17.500 12.500 15.500 16.500 10 18.500 6 17.200 3.500 16.400 1.500 15 0 13.300 5 14 10 11 11.500 7 12.500 4.500 12.800 2 12.800 0z" fill="#f4f4f4"/></svg>
<svg class="abs" style="left:2012px;top:906px" width="18" height="14" viewBox="0 0 18 14"><circle cx="4.100" cy="6" r="2.300" fill="none" stroke="#f4f4f4" stroke-width="1.500"/><path d="M11.200 2.400h4.600v4.200c0 2.300-1.200 4-3.800 5.400l-.7-1c1.500-.9 2.200-1.900 2.200-3.600h-2.300z" fill="#f4f4f4"/></svg>
<svg class="abs" style="left:2039px;top:905.500px" width="24" height="15" viewBox="0 0 24 15"><rect x=".2" y=".3" width="23" height="13.800" rx="2.800" fill="#f4f4f4"/><g fill="#127c6a"><rect x="2.6" y="2.6" width="1.800" height="1.800"/><rect x="5.9" y="2.6" width="1.800" height="1.800"/><rect x="9.2" y="2.6" width="1.800" height="1.800"/><rect x="12.5" y="2.6" width="1.800" height="1.800"/><rect x="15.8" y="2.6" width="1.800" height="1.800"/><rect x="19.1" y="2.6" width="1.800" height="1.800"/><rect x="2.6" y="5.8" width="1.800" height="1.800"/><rect x="5.9" y="5.8" width="1.800" height="1.800"/><rect x="9.2" y="5.8" width="1.800" height="1.800"/><rect x="12.5" y="5.8" width="1.800" height="1.800"/><rect x="15.8" y="5.8" width="1.800" height="1.800"/><rect x="19.1" y="5.8" width="1.800" height="1.800"/><rect x="2.6" y="9" width="1.800" height="1.800"/><rect x="19.1" y="9" width="1.800" height="1.800"/><rect x="5.900" y="9" width="3" height="1.800"/><rect x="10.500" y="9" width="7" height="1.800"/></g></svg>
<svg class="abs" style="left:2072px;top:902px" width="19" height="19" viewBox="0 0 19 19"><path d="M7.800 2.400v13.200L.7 9.700zM9.800 4l7.800 4.300-7.800 6z" fill="#f4f4f4"/><rect x="9.300" y=".3" width="2.600" height="1.500" fill="#f4f4f4"/><rect x="5.200" y="16.700" width="3.400" height="1.500" fill="#f4f4f4"/></svg>
<svg class="abs" style="left:2101px;top:902px" width="19" height="19" viewBox="0 0 19 19"><path d="M1.200 15.200L9.400 7.600C8.600 4.800 10 1.800 12.800.6c1-.4 2-.5 3-.2l-3 3 .6 2.800 2.800.6 2.400-2.600c.3 1.800-.2 3.700-1.600 5-1.500 1.400-3.500 1.800-5.300 1.300L3.800 18c-.8.700-2 .6-2.700-.2-.7-.8-.7-1.900.1-2.600z" fill="#f4f4f4"/></svg>
<div class="btn out" style="left:1049.500px;top:1000px;width:71.500px;height:33px;line-height:31px;padding-top:0">返 回</div>
<div class="btn pri" style="left:1131px;top:1000px;width:72px;height:33px;line-height:33px;padding-top:.8px">保 存</div>
<div class="btn pri" style="left:1211.500px;top:1000px;width:113.500px;height:33px;line-height:33px;padding-top:.8px">保存并审核</div>
</div>
</body>
</html>
